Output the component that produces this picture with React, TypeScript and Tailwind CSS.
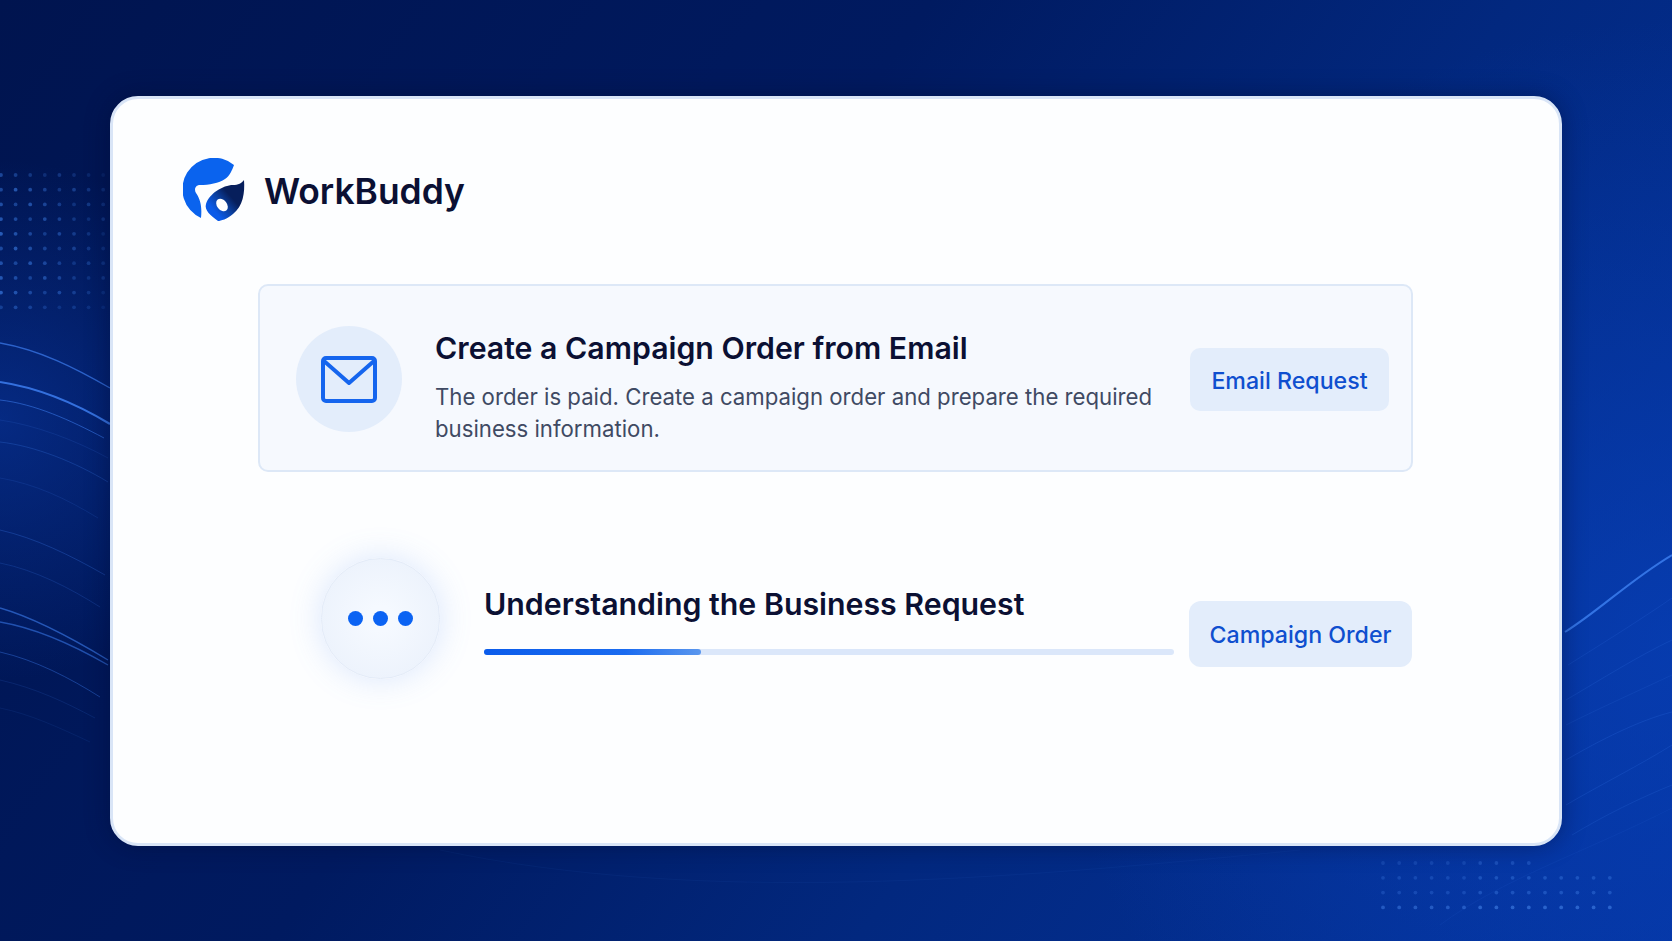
const font = { fontFamily: 'Inter, "Noto Sans", sans-serif' };

const leftDots = Array.from({ length: 10 }).flatMap((_, row) =>
  Array.from({ length: 8 }).map((_, col) => ({
    x: 1 + col * 14.6,
    y: 175 + row * 14.7,
    o: (0.62 - col * 0.055) * (row === 0 || row === 9 ? 0.7 : 1) * (1 - ((row * 3 + col * 5) % 4) * 0.1),
  })),
);

const rightDots = Array.from({ length: 4 }).flatMap((_, row) =>
  Array.from({ length: 15 }).map((_, col) => ({
    x: 1383 + col * 16.2,
    y: 863 + row * 14.8,
    o: row === 0 && col > 9 ? 0 : (0.2 + row * 0.07) * (1 - ((row + col * 3) % 3) * 0.15) + (col > 5 ? 0.08 : 0),
  })),
);

const leftWaves = [
  { d: 'M0 343C40 350 75 368 110 388', o: 0.7, w: 1.4 },
  { d: 'M0 382C40 388 80 406 110 424', o: 0.85, w: 2.2 },
  { d: 'M0 400C35 404 70 420 104 438', o: 0.55, w: 1 },
  { d: 'M0 420C35 425 75 440 108 458', o: 0.14, w: 1 },
  { d: 'M0 442C35 446 75 462 108 482', o: 0.25, w: 1 },
  { d: 'M0 478C35 484 65 498 98 518', o: 0.14, w: 1 },
  { d: 'M0 530C35 538 70 555 105 575', o: 0.28, w: 1 },
  { d: 'M0 563C35 570 70 588 100 607', o: 0.2, w: 1 },
  { d: 'M0 608C35 618 75 640 108 660', o: 0.6, w: 1.4 },
  { d: 'M0 622C35 628 75 646 108 665', o: 0.55, w: 1.4 },
  { d: 'M0 652C35 660 70 678 100 697', o: 0.4, w: 1 },
  { d: 'M0 680C35 688 65 702 95 718', o: 0.14, w: 1 },
  { d: 'M0 708C30 714 60 728 90 742', o: 0.1, w: 1 },
];

const rightWaves = [
  { d: 'M1565 632C1600 610 1630 580 1672 555', o: 0.8, w: 2 },
  { d: 'M1568 665C1600 645 1640 620 1672 598', o: 0.14, w: 1 },
  { d: 'M1566 700C1600 680 1640 655 1672 640', o: 0.16, w: 1 },
  { d: 'M1566 725C1600 708 1640 690 1672 675', o: 0.12, w: 1 },
  { d: 'M1566 760C1600 740 1640 720 1672 712', o: 0.18, w: 1 },
  { d: 'M1566 805C1600 785 1640 765 1672 745', o: 0.18, w: 1 },
  { d: 'M1572 835C1605 815 1640 798 1672 785', o: 0.16, w: 1 },
  { d: 'M1440 925C1500 880 1590 850 1672 808', o: 0.08, w: 1 },
  { d: 'M440 850C700 905 1000 880 1300 850', o: 0.06, w: 1 },
];

function Backdrop() {
  return (
    <svg className="absolute inset-0" width="1672" height="941" viewBox="0 0 1672 941" fill="none">
      <defs>
        <radialGradient id="glowRight" cx="1672" cy="640" r="620" gradientUnits="userSpaceOnUse">
          <stop offset="0" stopColor="#0840b8" stopOpacity="0.7" />
          <stop offset="1" stopColor="#0840b8" stopOpacity="0" />
        </radialGradient>
        <radialGradient id="glowLeft" cx="0" cy="420" r="260" gradientUnits="userSpaceOnUse">
          <stop offset="0" stopColor="#0a3aa8" stopOpacity="0.55" />
          <stop offset="1" stopColor="#0a3aa8" stopOpacity="0" />
        </radialGradient>
      </defs>
      <rect width="1672" height="941" fill="url(#glowRight)" />
      <rect width="1672" height="941" fill="url(#glowLeft)" />
      {leftDots.map((d, i) => (
        <circle key={i} cx={d.x} cy={d.y} r="1.9" fill="#3f83ee" opacity={d.o} />
      ))}
      {rightDots.map((d, i) => (
        <circle key={i} cx={d.x} cy={d.y} r="1.9" fill="#4f90f5" opacity={d.o} />
      ))}
      {leftWaves.map((w, i) => (
        <path key={i} d={w.d} stroke="#3d7ef0" strokeWidth={w.w} opacity={w.o} />
      ))}
      {rightWaves.map((w, i) => (
        <path key={i} d={w.d} stroke="#3f82f2" strokeWidth={w.w} opacity={w.o} />
      ))}
    </svg>
  );
}

function Logo() {
  return (
    <svg width="64" height="64" viewBox="0 0 64 64" fill="none" className="ml-[1px] shrink-0">
      <defs>
        <linearGradient id="leaf" x1="28" y1="58" x2="58" y2="32" gradientUnits="userSpaceOnUse">
          <stop offset="0.15" stopColor="#0a5ae8" />
          <stop offset="0.45" stopColor="#0b3f9e" />
          <stop offset="0.7" stopColor="#071f5c" />
        </linearGradient>
      </defs>
      <path
        d="M51 7A31.5 31.5 0 1 0 18 60C19 50 18 42 13 35C11 32 12 27 17 27C26 27 36 25 42 21C47 18 49 12 51 7Z"
        fill="#0a63ee"
      />
      <path d="M61 22C62 35 60 48 50 56C44 61 38 63 35 63C28 58 21 52 23 46C26 36 40 27 50 27C55 27 59 25 61 22Z" fill="url(#leaf)" />
      <ellipse cx="39" cy="47" rx="5" ry="7" transform="rotate(-38 39 47)" fill="#fff" />
    </svg>
  );
}

export default function App() {
  return (
    <div
      className="relative h-[941px] w-full overflow-hidden pt-[96px] pl-[110px] bg-[linear-gradient(125deg,#00144f_0%,#001a60_40%,#02287f_65%,#0434a0_100%)]"
      style={font}
    >
      <Backdrop />

      <main className="relative h-[750px] w-[1452px] rounded-[28px] border-[3px] border-[#d9e5f7] bg-[#fdfeff] pt-[59px] pl-[69px] shadow-[0_0_24px_rgba(0,12,50,0.45)]">
        {/* Logo */}
        <div className="flex h-[64px] items-center gap-[17px]">
          <Logo />
          <span className="mt-[4px] text-[35.4px] font-semibold text-[#0b1033]">WorkBuddy</span>
        </div>

        {/* Email request */}
        <section className="mt-[62px] ml-[76px] flex h-[188px] w-[1155px] items-center rounded-[10px] border-2 border-[#dde8f7] bg-[#f6f9fe] pt-[2px] pl-[36px]">
          <div className="flex h-[106px] w-[106px] shrink-0 items-center justify-center rounded-full bg-[#e3edfb]">
            <svg width="56" height="47" viewBox="0 0 56 47" fill="none" stroke="#1565ee" strokeWidth="4" strokeLinejoin="round">
              <rect x="2" y="2" width="52" height="43" rx="3" />
              <path d="M3 5L28 27L53 5" />
            </svg>
          </div>
          <div className="ml-[33px] w-[745px] shrink-0 pt-[16px]">
            <h2 className="text-[30.25px] leading-[36px] font-semibold text-[#0b1033]">Create a Campaign Order from Email</h2>
            <p className="mt-[15px] text-[22.2px] leading-[31.5px] text-[#3f4a63]">
              The order is paid. Create a campaign order and prepare the required business information.
            </p>
          </div>
          <div className="ml-[10px] flex h-[63px] w-[199px] shrink-0 items-center justify-center rounded-[10px] bg-[#e3edfb] pt-[4px] text-[23.2px] font-medium text-[#0f4fcf]">
            Email Request
          </div>
        </section>

        {/* Progress */}
        <section className="mt-[86px] ml-[139px] flex items-start">
          <div className="flex h-[121px] w-[119px] shrink-0 items-center justify-center gap-[10px] rounded-full border border-[#e3ebf8] bg-[radial-gradient(circle,#f5f9ff_15%,#e9f0fb_100%)] shadow-[0_0_32px_rgba(96,145,240,0.22)]">
            <span className="h-[15px] w-[15px] rounded-full bg-[#0b63f3]" />
            <span className="h-[15px] w-[15px] rounded-full bg-[#0b63f3]" />
            <span className="h-[15px] w-[15px] rounded-full bg-[#0b63f3]" />
          </div>
          <div className="mt-[28px] ml-[44px] w-[690px] shrink-0">
            <h2 className="text-[30.3px] leading-[36px] font-semibold text-[#0b1033]">Understanding the Business Request</h2>
            <div className="mt-[27px] h-[6px] w-full rounded-full bg-[#dbe7fa]">
              <div className="h-full w-[217px] rounded-full bg-[linear-gradient(90deg,#0b5ceb_0%,#1a6bf0_65%,#5b97ee_100%)]" />
            </div>
          </div>
          <div className="mt-[43px] ml-[15px] flex h-[66px] w-[223px] shrink-0 items-center justify-center rounded-[12px] bg-[#e3edfb] pt-[2px] text-[23.2px] font-medium text-[#0f4fcf]">
            Campaign Order
          </div>
        </section>
      </main>
    </div>
  );
}
